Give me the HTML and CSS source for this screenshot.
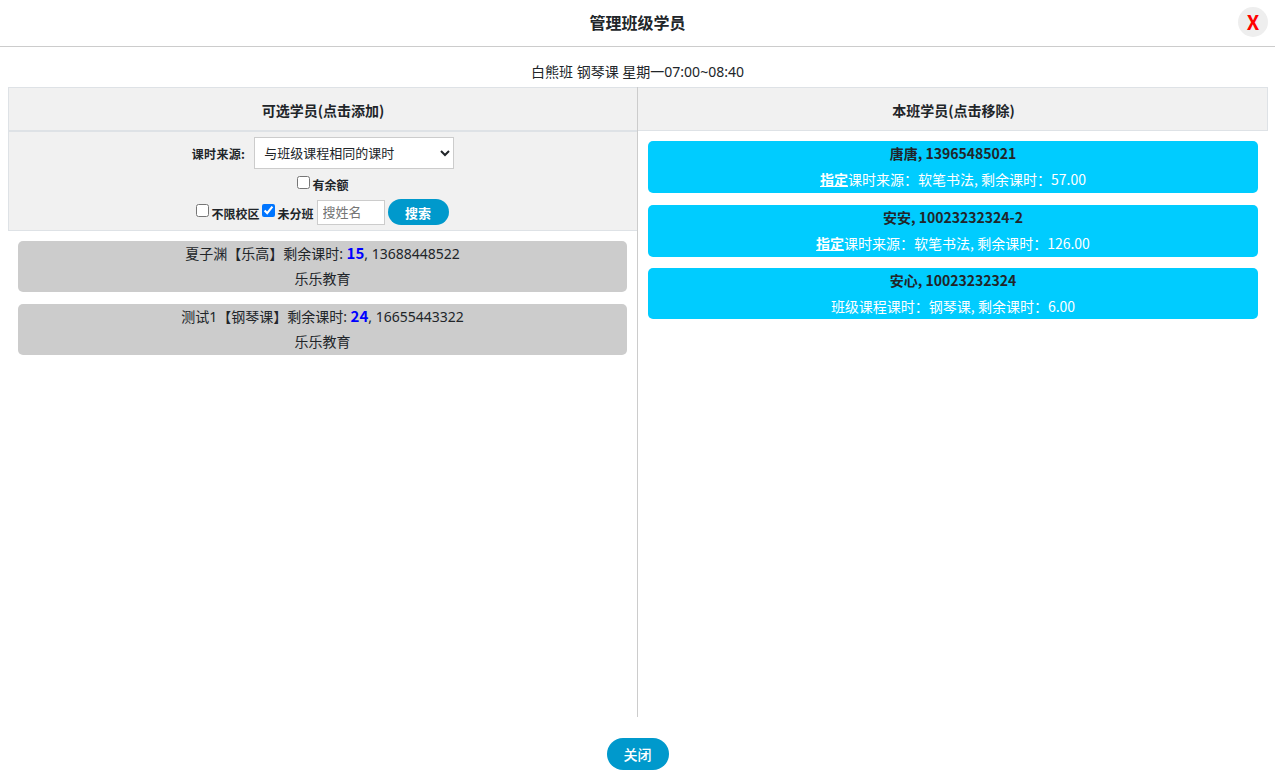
FILE: index.html
```html
<!DOCTYPE html>
<html lang="zh-CN">
<head>
<meta charset="utf-8">
<title>管理班级学员</title>
<link rel="stylesheet" href="styles.css">
</head>
<body>
<header class="topbar">
  <h1 class="title">管理班级学员</h1>
  <button class="close-x" type="button">X</button>
</header>
<p class="subtitle">白熊班 钢琴课 星期一07:00~08:40</p>
<main class="columns">
  <section class="col col-left">
    <h2 class="col-head">可选学员(点击添加)</h2>
    <form class="filters">
      <div class="f-row f-source">
        <label class="lbl">课时来源:</label>
        <select class="source"><option>与班级课程相同的课时</option></select>
      </div>
      <div class="f-row f-balance">
        <label class="chk"><input type="checkbox"><span>有余额</span></label>
      </div>
      <div class="f-row f-search">
        <label class="chk"><input type="checkbox"><span>不限校区</span></label>
        <label class="chk chk-wide"><input type="checkbox" checked><span>未分班</span></label>
        <input class="name" type="text" placeholder="搜姓名">
        <button class="pill pill-search" type="button">搜索</button>
      </div>
    </form>
    <ul class="list">
      <li class="card card-grey">
        <div class="line">夏子渊【乐高】剩余课时: <b class="num">15</b>, 13688448522</div>
        <div class="line">乐乐教育</div>
      </li>
      <li class="card card-grey">
        <div class="line">测试1【钢琴课】剩余课时: <b class="num">24</b>, 16655443322</div>
        <div class="line">乐乐教育</div>
      </li>
    </ul>
  </section>
  <section class="col col-right">
    <h2 class="col-head col-head-right">本班学员(点击移除)</h2>
    <ul class="list">
      <li class="card card-blue">
        <div class="line who">唐唐, 13965485021</div>
        <div class="line info"><b class="spec">指定</b>课时来源：软笔书法, 剩余课时：57.00</div>
      </li>
      <li class="card card-blue">
        <div class="line who">安安, 10023232324-2</div>
        <div class="line info"><b class="spec">指定</b>课时来源：软笔书法, 剩余课时：126.00</div>
      </li>
      <li class="card card-blue card-short">
        <div class="line who">安心, 10023232324</div>
        <div class="line info">班级课程课时：钢琴课, 剩余课时：6.00</div>
      </li>
    </ul>
  </section>
</main>
<footer class="foot">
  <button class="pill pill-close" type="button">关闭</button>
</footer>
</body>
</html>
```
FILE: styles.css
```css
* { box-sizing: border-box; }
html, body { height: 100%; }
body {
  margin: 0;
  height: 773px;
  overflow: hidden;
  background: #fff;
  color: #212529;
  font: 14px/1.5 "Noto Sans CJK SC", sans-serif;
  display: flex;
  flex-direction: column;
}
.topbar {
  height: 47px;
  flex: none;
  border-bottom: 1px solid #ccc;
  display: flex;
  align-items: center;
  justify-content: center;
  position: relative;
}
.title { margin: 0 0 2px; font-size: 16px; font-weight: 700; }
.close-x {
  position: absolute;
  right: 7px;
  top: 7px;
  width: 30px;
  height: 30px;
  border: 0;
  border-radius: 50%;
  padding: 0;
  background: #eee;
  color: #f00;
  font: 700 20px/30px "Noto Sans CJK SC", sans-serif;
}
.subtitle {
  margin: 0;
  height: 40px;
  flex: none;
  padding-top: 14px;
  line-height: 21px;
  text-align: center;
  font-family: "Noto Sans", "Noto Sans CJK SC", sans-serif;
  font-size: 14px;
}
.columns {
  flex: none;
  height: 630px;
  margin: 0 7px 0 8px;
  display: flex;
}
.col { flex: 1 1 0; min-width: 0; }
.col-left { border-right: 1px solid #ccc; flex: 0 0 630px; }
.col-head {
  margin: 0;
  height: 44px;
  background: #f1f1f1;
  border: 1px solid #dee2e6;
  font-size: 14px;
  font-weight: 700;
  line-height: 44px;
  text-align: center;
}
.col-left .col-head { border-right: 0; }
.col-right .col-head { border-left: 0; padding-left: 2px; }
.filters {
  height: 100px;
  background: #f1f1f1;
  border: 1px solid #dee2e6;
  border-right: 0;
  padding-top: 5px;
  font-size: 12px;
  font-weight: 700;
}
.f-row { display: flex; justify-content: center; align-items: center; }
.f-source { height: 32px; }
.lbl { margin-right: 9px; padding-top: 2px; letter-spacing: 0.3px; }
.source {
  width: 200px;
  height: 32px;
  padding: 0 5px;
  border: 1px solid #ccc;
  border-radius: 0;
  background: #fff;
  color: #212529;
  font: 400 13px "Noto Sans", "Noto Sans CJK SC", sans-serif;
}
.f-balance { height: 30px; }
.chk { display: inline-flex; align-items: center; }
.chk input { margin: 0 2px 3px 0; width: 13px; height: 13px; }
.chk-wide input { margin-right: 3px; }
.f-balance .chk span { padding-top: 2px; }
.f-search { height: 26px; gap: 2px; padding-right: 1px; }
.f-search .chk span { padding-top: 4px; }
.name {
  width: 68px;
  height: 25px;
  padding: 0 5px;
  border: 1px solid #ccc;
  font: 400 13px "Noto Sans", "Noto Sans CJK SC", sans-serif;
  margin: 0 1px;
}
.name::placeholder { color: #757575; }
.pill {
  border: 0;
  background: #0099cc;
  color: #fff;
  font: 700 13px "Noto Sans CJK SC", sans-serif;
}
.pill-search { width: 61px; height: 26px; border-radius: 13px; }
.list { list-style: none; margin: 0; padding: 10px 10px 0; }
.card {
  border-radius: 5px;
  text-align: center;
  margin-bottom: 12px;
  height: 51px;
}
.card-grey { background: #ccc; font-family: "Noto Sans", "Noto Sans CJK SC", sans-serif; }
.card-grey .line { line-height: 24px; }
.card-blue { background: #00ccff; height: 52px; }
.card-short { height: 51px; margin-top: -1px; }
.line { height: 25.5px; line-height: 25px; }
.num { color: #00f; font-size: 15px; font-family: "Noto Sans CJK SC", sans-serif; }
.who { font-weight: 700; }
.info { color: #fff; }
.spec { text-decoration: underline; }
.foot {
  flex: 1;
  display: flex;
  justify-content: center;
  padding-top: 21px;
}
.pill-close { width: 62px; height: 32px; border-radius: 16px; font-weight: 500; font-size: 14px; }
```
